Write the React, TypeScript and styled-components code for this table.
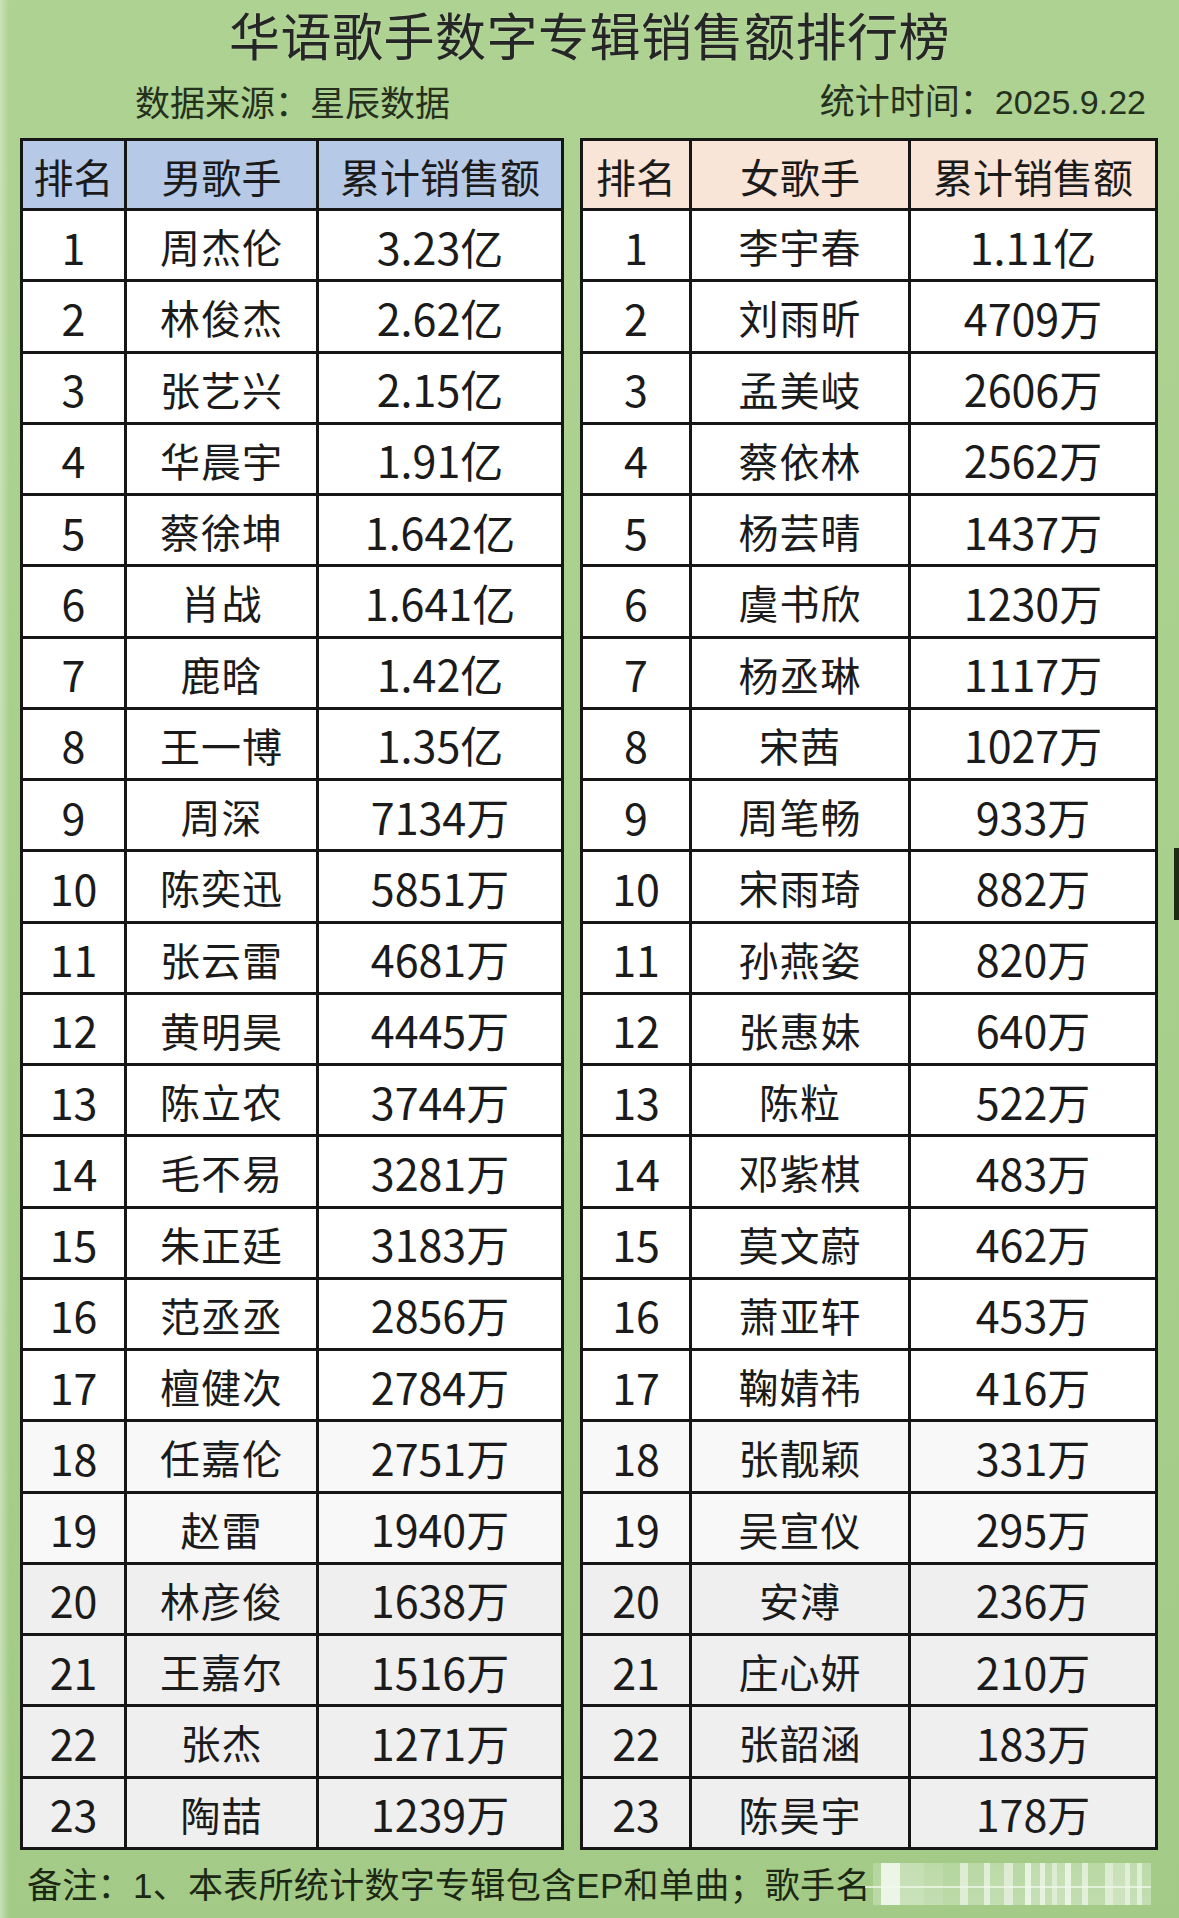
import React from "react";
import styled, { createGlobalStyle } from "styled-components";

const Global = createGlobalStyle`
  html, body { margin: 0; padding: 0; }
  body { background: #a8cf8c; }
`;

const CJK = `"Noto Sans CJK SC", "Noto Sans", sans-serif`;
const NUM = `"Liberation Sans Narrow", "Arial Narrow", "Noto Sans CJK SC", sans-serif`;

const Page = styled.div`
  position: relative;
  width: 1179px;
  height: 1918px;
  overflow: hidden;
  background:
    linear-gradient(to right, rgba(214, 234, 200, 0.7) 0px, rgba(214, 234, 200, 0) 9px),
    linear-gradient(to bottom, #aed292 0%, #a8cf8c 50%, #a3cb87 100%);
  font-family: ${CJK};
  color: #1d1d1d;
  display: flex;
  flex-direction: column;
`;

const Title = styled.h1`
  margin: 0;
  height: 68px;
  display: flex;
  align-items: center;
  justify-content: center;
  font-size: 51px;
  line-height: 1;
  font-weight: 400;
  color: #262626;
  letter-spacing: 0.5px;
  text-shadow: 0 0 2px rgba(255, 255, 255, 0.35);
`;

const SubRow = styled.div`
  height: 64px;
  display: flex;
  align-items: center;
  justify-content: space-between;
  padding: 0 33px 0 135px;
  font-size: 35px;
  line-height: 1;
  color: #25301d;
`;

const SubDigits = styled.span`
  font-family: "Liberation Sans", Arial, sans-serif;
  font-size: 34px;
`;

const Tables = styled.div`
  margin-top: 6px;
  display: flex;
  gap: 16px;
  padding: 0 21px 0 20px;
`;

const Grid = styled.div<{ $cols: string }>`
  display: grid;
  grid-template-columns: ${(p) => p.$cols};
  grid-template-rows: 70px;
  grid-auto-rows: 71.26px;
  border-top: 3px solid #161616;
  border-left: 3px solid #161616;
  box-sizing: border-box;
  background: #fff;
`;

const Cell = styled.div<{ $bg?: string; $head?: boolean }>`
  box-sizing: border-box;
  border-right: 3px solid #161616;
  border-bottom: 3px solid #161616;
  display: flex;
  align-items: center;
  justify-content: center;
  background: ${(p) => p.$bg || "#fff"};
  font-family: ${(p) => (p.$head ? CJK : NUM)};
  font-size: ${(p) => (p.$head ? "40px" : "43px")};
  line-height: 1;
  color: #1b1b1b;
  white-space: nowrap;
  padding-top: 2px;
`;

const NameCell = styled(Cell)`
  font-family: ${CJK};
  font-size: 40px;
  letter-spacing: 1px;
`;

const Footer = styled.div`
  flex: 1;
  display: flex;
  align-items: center;
  padding-left: 27px;
  font-size: 35px;
  line-height: 1;
  color: #1c2814;
  letter-spacing: 0.3px;
`;

const Latin = styled.span`
  font-family: "Liberation Sans", Arial, sans-serif;
`;

const Fade = styled.div`
  position: relative;
  margin-left: 2px;
  width: 278px;
  height: 42px;
  display: flex;
  align-items: stretch;
  background: linear-gradient(to bottom, rgba(190, 220, 170, 0.5), rgba(200, 225, 185, 0.6));
`;

const Stripe = styled.div<{ $w: number; $o: number }>`
  width: ${(p) => p.$w}px;
  background: rgba(255, 255, 255, ${(p) => p.$o});
`;

const FadeLine = styled.div`
  position: absolute;
  left: -8px;
  right: 0;
  top: 23px;
  height: 2px;
  background: rgba(240, 248, 235, 0.75);
`;

const EdgeMark = styled.div`
  position: absolute;
  right: 0;
  top: 848px;
  width: 5px;
  height: 72px;
  background: #1d2a16;
`;

const male: [string, string][] = [
  ["周杰伦", "3.23亿"],
  ["林俊杰", "2.62亿"],
  ["张艺兴", "2.15亿"],
  ["华晨宇", "1.91亿"],
  ["蔡徐坤", "1.642亿"],
  ["肖战", "1.641亿"],
  ["鹿晗", "1.42亿"],
  ["王一博", "1.35亿"],
  ["周深", "7134万"],
  ["陈奕迅", "5851万"],
  ["张云雷", "4681万"],
  ["黄明昊", "4445万"],
  ["陈立农", "3744万"],
  ["毛不易", "3281万"],
  ["朱正廷", "3183万"],
  ["范丞丞", "2856万"],
  ["檀健次", "2784万"],
  ["任嘉伦", "2751万"],
  ["赵雷", "1940万"],
  ["林彦俊", "1638万"],
  ["王嘉尔", "1516万"],
  ["张杰", "1271万"],
  ["陶喆", "1239万"],
];

const female: [string, string][] = [
  ["李宇春", "1.11亿"],
  ["刘雨昕", "4709万"],
  ["孟美岐", "2606万"],
  ["蔡依林", "2562万"],
  ["杨芸晴", "1437万"],
  ["虞书欣", "1230万"],
  ["杨丞琳", "1117万"],
  ["宋茜", "1027万"],
  ["周笔畅", "933万"],
  ["宋雨琦", "882万"],
  ["孙燕姿", "820万"],
  ["张惠妹", "640万"],
  ["陈粒", "522万"],
  ["邓紫棋", "483万"],
  ["莫文蔚", "462万"],
  ["萧亚轩", "453万"],
  ["鞠婧祎", "416万"],
  ["张靓颖", "331万"],
  ["吴宣仪", "295万"],
  ["安溥", "236万"],
  ["庄心妍", "210万"],
  ["张韶涵", "183万"],
  ["陈昊宇", "178万"],
];

const rowBg = (i: number) => {
  if (i >= 19) return "#efefef";
  if (i >= 17) return "#f8f8f8";
  return "#ffffff";
};

const stripes: [number, number][] = [
  [10, 0.05], [22, 0.75], [28, 0.25], [22, 0.15], [20, 0.05], [10, 0.55], [18, 0.1],
  [8, 0.6], [16, 0.15], [10, 0.55], [14, 0.1], [8, 0.7], [10, 0.2], [6, 0.65],
  [8, 0.2], [6, 0.55], [10, 0.25], [6, 0.7], [14, 0.15], [6, 0.6], [20, 0.1],
  [10, 0.55], [14, 0.3], [6, 0.6], [8, 0.2], [6, 0.6], [10, 0.15],
];

function RankTable({
  cols,
  headBg,
  label,
  data,
}: {
  cols: string;
  headBg: string;
  label: string;
  data: [string, string][];
}) {
  return (
    <Grid $cols={cols}>
      <Cell $head $bg={headBg}>排名</Cell>
      <Cell $head $bg={headBg}>{label}</Cell>
      <Cell $head $bg={headBg}>累计销售额</Cell>
      {data.map(([name, amount], i) => (
        <React.Fragment key={name}>
          <Cell $bg={rowBg(i)}>{i + 1}</Cell>
          <NameCell $bg={rowBg(i)}>{name}</NameCell>
          <Cell $bg={rowBg(i)}>{amount}</Cell>
        </React.Fragment>
      ))}
    </Grid>
  );
}

export default function App() {
  return (
    <>
      <Global />
      <Page>
        <Title>华语歌手数字专辑销售额排行榜</Title>
        <SubRow>
          <span>数据来源：星辰数据</span>
          <span>
            统计时间：<SubDigits>2025.9.22</SubDigits>
          </span>
        </SubRow>
        <Tables>
          <RankTable cols="104px 192px 245px" headBg="#b6c9e6" label="男歌手" data={male} />
          <RankTable cols="109px 219px 247px" headBg="#f9e4d8" label="女歌手" data={female} />
        </Tables>
        <Footer>
          <span>
            备注：<Latin>1</Latin>、本表所统计数字专辑包含<Latin>EP</Latin>和单曲；歌手名
          </span>
          <Fade>
            {stripes.map(([w, o], i) => (
              <Stripe key={i} $w={w} $o={o} />
            ))}
            <FadeLine />
          </Fade>
        </Footer>
        <EdgeMark />
      </Page>
    </>
  );
}
